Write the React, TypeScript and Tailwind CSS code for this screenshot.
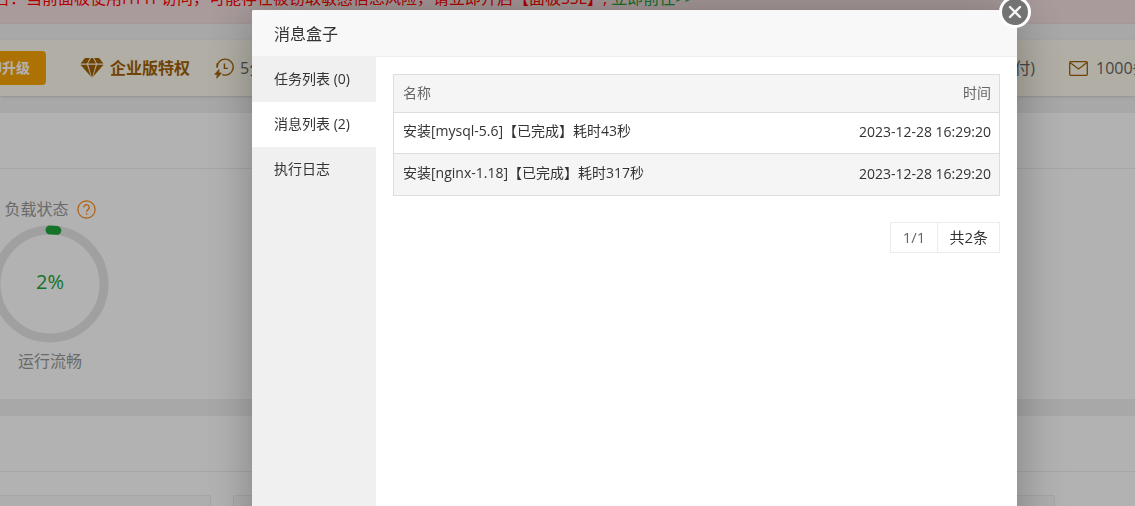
import { useState } from 'react';

const TABS = ['任务列表 (0)', '消息列表 (2)', '执行日志'];

const MESSAGES = [
  { name: '安装[mysql-5.6]【已完成】耗时43秒', time: '2023-12-28 16:29:20' },
  { name: '安装[nginx-1.18]【已完成】耗时317秒', time: '2023-12-28 16:29:20' },
];

function GemIcon() {
  return (
    <svg width="24" height="20" viewBox="0 0 24 20" fill="#a06205">
      <path d="M5 0h4.8L7 5.5H0.6z" />
      <path d="M11 0h2l3 5.5H8z" />
      <path d="M14.2 0H19l4.4 5.5H17z" />
      <path d="M0.5 6.8H7l4 12z" />
      <path d="M8.2 6.8h7.6L12 19.8z" />
      <path d="M17 6.8h6.5L13 18.8z" />
    </svg>
  );
}

function ClockBoltIcon() {
  return (
    <svg width="20" height="21" viewBox="0 0 20 21" fill="none" stroke="#a06205" strokeWidth="1.4">
      <path d="M3.2 9.5A8 8 0 1 1 8.4 16.6" />
      <path d="M3.2 9.5V5.2" />
      <path d="M10.4 5.4v5h3.4" />
      <path d="M5 11.5L0.8 16.2h2.4L2.8 20.2l4.6-5.2H4.8z" fill="#a06205" strokeWidth="0.8" />
    </svg>
  );
}

function MailIcon() {
  return (
    <svg width="19" height="15" viewBox="0 0 19 15" fill="none" stroke="#a06205" strokeWidth="1.3">
      <rect x="0.7" y="0.7" width="17.6" height="13.6" rx="1" />
      <path d="M1 1.5l8.5 6.5L18 1.5" />
    </svg>
  );
}

function LoadGauge() {
  return (
    <div className="-ml-[9px] flex w-[118px] flex-col items-center text-base text-[#999]">
      <div className="flex h-6 items-center gap-2 whitespace-nowrap">
        <span>负载状态</span>
        <svg width="19" height="19" viewBox="0 0 19 19" fill="none" stroke="#fc8a10">
          <circle cx="9.5" cy="9.5" r="8.6" strokeWidth="1.2" />
          <path d="M6.8 7.4a2.7 2.7 0 1 1 4.3 2.2c-1 .7-1.5 1.1-1.5 2.2" strokeWidth="1.3" />
          <path d="M9.6 13.2v1.4" strokeWidth="1.4" />
        </svg>
      </div>
      <div className="mt-1 grid size-[118px] place-items-center">
        <svg className="col-start-1 row-start-1" width="118" height="118" viewBox="0 0 118 118" fill="none">
          <circle cx="59" cy="59" r="54" stroke="#e6e6e6" strokeWidth="9" />
          <path d="M59 5a54 54 0 0 1 6.8 .4" stroke="#20a53a" strokeWidth="9" strokeLinecap="round" />
        </svg>
        <span className="col-start-1 row-start-1 pb-1 text-xl text-[#20a53a]">2%</span>
      </div>
      <div className="mt-1.5 h-6">运行流畅</div>
    </div>
  );
}

function Dashboard() {
  return (
    <div className="min-h-screen bg-[#f1f1f1]">
      <div className="h-6 border-b border-[#e8dada] bg-[#f2dede]">
        <p className="-ml-[22px] -translate-y-3.5 whitespace-nowrap text-base text-[red]">
          警告：当前面板使用HTTP访问，可能存在被窃取敏感信息风险，请立即开启【面板SSL】,{' '}
          <a href="#" className="text-[#20a53a]">立即前往&gt;&gt;</a>
        </p>
      </div>

      {/* Upgrade bar */}
      <div className="mt-4 flex h-14 items-center whitespace-nowrap bg-[#fdf9ec] text-base text-[#666] shadow-sm">
        <button className="-ml-11 h-[34px] rounded bg-[#f7a506] pr-4 pl-[18px] text-sm font-bold text-white">
          立即升级
        </button>
        <div className="ml-[34px] flex items-center gap-1.5 font-bold text-[#a06205]">
          <GemIcon />
          企业版特权
        </div>
        <div className="ml-6 flex items-center gap-1.5">
          <ClockBoltIcon />
          5分钟
        </div>
        <div className="flex-1 text-right">授权SSL(年付)</div>
        <div className="ml-[34px] flex w-[66px] items-center gap-2">
          <span className="shrink-0"><MailIcon /></span>
          1000条
        </div>
      </div>

      {/* Status card */}
      <div className="mt-[17px] h-[286px] bg-white">
        <div className="h-14 border-b border-[#eee]" />
        <div className="pt-7">
          <LoadGauge />
        </div>
      </div>

      {/* Overview card */}
      <div className="mt-[17px] bg-white">
        <div className="h-14 border-b border-[#eee]" />
        <div className="-ml-[189px] mr-20 grid grid-cols-3 gap-[22px] pt-[23px]">
          <div className="h-20 rounded-xs border border-[#eee] bg-[#fafafa]" />
          <div className="h-20 rounded-xs border border-[#eee] bg-[#fafafa]" />
          <div className="h-20 rounded-xs border border-[#eee] bg-[#fafafa]" />
        </div>
      </div>
    </div>
  );
}

function MessageTable() {
  return (
    <table className="w-full border border-[#ddd] text-sm text-[#333]">
      <thead>
        <tr className="h-[38px] bg-[#f5f5f5] text-[#666]">
          <th className="px-[9px] pb-0.5 text-left font-normal">名称</th>
          <th className="px-2 pb-0.5 text-right font-normal">时间</th>
        </tr>
      </thead>
      <tbody>
        {MESSAGES.map((message) => (
          <tr key={message.name} className="h-[41px] border-t border-[#ddd] last:h-[42px] even:bg-[#f5f5f5]">
            <td className="px-[9px] pb-1">{message.name}</td>
            <td className="px-2 pb-0.5 text-right">{message.time}</td>
          </tr>
        ))}
      </tbody>
    </table>
  );
}

function MessageBox() {
  const [active, setActive] = useState(1);

  return (
    <div role="dialog" aria-label="消息盒子" className="relative -mb-12 flex flex-1 flex-col rounded-xs bg-white shadow-[1px_1px_50px_rgba(0,0,0,0.3)]">
      <h2 className="h-[47px] rounded-t-xs border-b border-[#eee] bg-[#f8f8f8] px-[22px] text-base leading-[48px] text-[#333]">
        消息盒子
      </h2>
      <button aria-label="关闭" className="absolute -top-[14px] -right-[14px] grid size-8 place-items-center rounded-full border-3 border-white bg-[#737373]">
        <svg width="14" height="14" viewBox="0 0 14 14" stroke="#f4f4f4" strokeWidth="2.4" strokeLinecap="round">
          <path d="M2 2l10 10M12 2L2 12" />
        </svg>
      </button>
      <div className="flex flex-1">
        <div className="w-[124px] bg-[#f0f0f0]">
          {TABS.map((tab, index) => (
            <button
              key={tab}
              onClick={() => setActive(index)}
              className={`block h-[45px] w-full px-[22px] pb-0.5 text-left text-sm whitespace-nowrap text-[#333] ${index === active ? 'bg-white' : ''}`}
            >
              {tab}
            </button>
          ))}
        </div>
        <div className="flex-1 p-[17px]">
          <MessageTable />
          <div className="mt-[26px] flex justify-end">
            <div className="flex h-[31px] items-center border border-[#ececec] text-[15px]">
              <span className="px-3 text-[#666]">1/1</span>
              <span className="flex h-full items-center border-l border-[#ececec] px-[11px] text-[#333]">共2条</span>
            </div>
          </div>
        </div>
      </div>
    </div>
  );
}

function App() {
  return (
    <div className="h-screen overflow-hidden font-['Open_Sans','Noto_Sans_CJK_SC',sans-serif]">
      <Dashboard />
      <div className="fixed inset-0 flex overflow-hidden bg-black/30 pt-[10px] pr-[118px] pl-[252px]">
        <MessageBox />
      </div>
    </div>
  );
}

export default App;
